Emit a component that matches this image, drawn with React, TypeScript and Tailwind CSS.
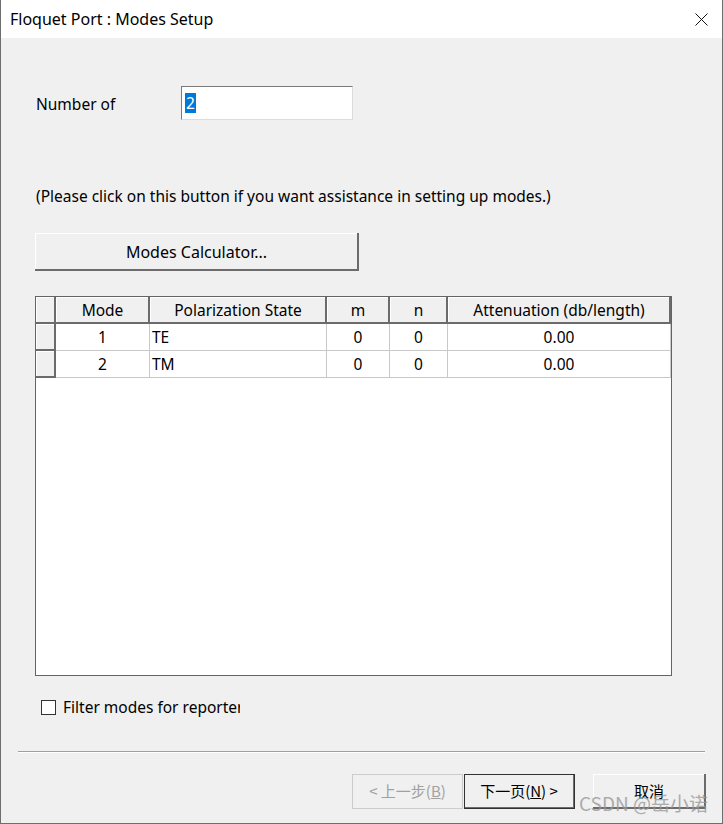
import React from "react";

const COLS = [
  { label: "Mode", w: "w-[94px]" },
  { label: "Polarization State", w: "w-[177px]" },
  { label: "m", w: "w-[63px]" },
  { label: "n", w: "w-[58px]" },
  { label: "Attenuation (db/length)", w: "flex-1" },
];

const ROWS = [
  ["1", "TE", "0", "0", "0.00"],
  ["2", "TM", "0", "0", "0.00"],
];

function Bevel({ className = "", children }: { className?: string; children?: React.ReactNode }) {
  return (
    <div className={"border-r-2 border-b-2 border-[#6b6b6b] bg-[#f0f0f0] " + className}>
      <div className="h-full w-full border-t border-l border-white">{children}</div>
    </div>
  );
}

export default function App() {
  return (
    <div className="relative flex h-[824px] w-[723px] flex-col border-x border-b border-[#6e6e6e] bg-[#f0f0f0] font-['Noto_Sans','Segoe_UI',sans-serif] text-[15.5px] text-black">
      {/* title bar */}
      <div className="flex h-[38px] items-center justify-between bg-white pl-[9px] pr-[14px]">
        <span className="text-[16px]">Floquet Port : Modes Setup</span>
        <svg width="13" height="13" viewBox="0 0 13 13" stroke="#111" strokeWidth="1">
          <path d="M0.5 0.5L12.5 12.5M12.5 0.5L0.5 12.5" />
        </svg>
      </div>

      <div className="flex flex-1 flex-col px-[34px]">
        {/* number of */}
        <div className="mt-[48px] flex items-center">
          <span className="w-[146px] pt-[3px] pl-[1px]">Number of</span>
          <div className="flex h-[34px] w-[172px] items-center border border-[#7a7a7a] border-r-[#dcdcdc] border-b-[#dcdcdc] bg-white pl-[3px]">
            <span className="bg-[#0078d7] px-[1px] leading-[20px] text-white">2</span>
          </div>
        </div>

        <p className="mt-[65px] pl-[1px]">(Please click on this button if you want assistance in setting up modes.)</p>

        <Bevel className="mt-[25px] h-[38px] w-[324px]">
          <div className="flex h-full items-center justify-center text-[16px]">Modes Calculator...</div>
        </Bevel>

        {/* table */}
        <div className="mt-[25px] flex h-[380px] w-[637px] flex-col border border-[#646464] bg-white">
          <div className="flex h-[27px]">
            <Bevel className="h-full w-[20px]" />
            {COLS.map((c) => (
              <Bevel key={c.label} className={"h-full " + c.w}>
                <div className="flex h-full items-center justify-center">{c.label}</div>
              </Bevel>
            ))}
          </div>
          {ROWS.map((r) => (
            <div key={r[0]} className="flex h-[27px]">
              <Bevel className="h-full w-[20px]" />
              {r.map((v, i) => (
                <div
                  key={i}
                  className={
                    "flex h-full items-center border-r border-b border-[#c8c8c8] " +
                    COLS[i].w +
                    (i === 1 ? " justify-start pl-[2px]" : " justify-center")
                  }
                >
                  {v}
                </div>
              ))}
            </div>
          ))}
        </div>

        {/* filter checkbox */}
        <div className="mt-[20px] ml-[6px] flex items-center">
          <div className="h-[15px] w-[15px] border border-[#333] bg-white" />
          <span className="ml-[7px] w-[177px] overflow-hidden whitespace-nowrap">Filter modes for reporter</span>
        </div>
      </div>

      {/* separator */}
      <div className="mx-[17px] mb-[21px] border-t border-b border-t-[#a0a0a0] border-b-white" />

      {/* buttons */}
      <div className="mb-[14px] flex justify-end pr-[16px] font-['Noto_Sans_CJK_SC','Noto_Sans',sans-serif] text-[15px]">
        <div className="flex h-[35px] w-[111px] items-center justify-center border border-[#cccccc] text-[#a0a0a0]">
          &lt; 上一步(<span className="underline">B</span>)
        </div>
        <div className="ml-[1px] h-[35px] w-[111px] border border-[#333] bg-[#f0f0f0]">
          <div className="flex h-full items-center justify-center border-r border-b border-[#6b6b6b]">
            下一页(<span className="underline">N</span>) &gt;
          </div>
        </div>
        <Bevel className="ml-[18px] h-[35px] w-[113px]">
          <div className="flex h-full items-center justify-center">取消</div>
        </Bevel>
      </div>

      {/* watermark */}
      <div className="absolute right-[14px] bottom-[6px] font-['Noto_Sans_CJK_SC',sans-serif] text-[19px] text-[#9a9a9a] opacity-80">
        CSDN @岳小诺
      </div>
    </div>
  );
}
